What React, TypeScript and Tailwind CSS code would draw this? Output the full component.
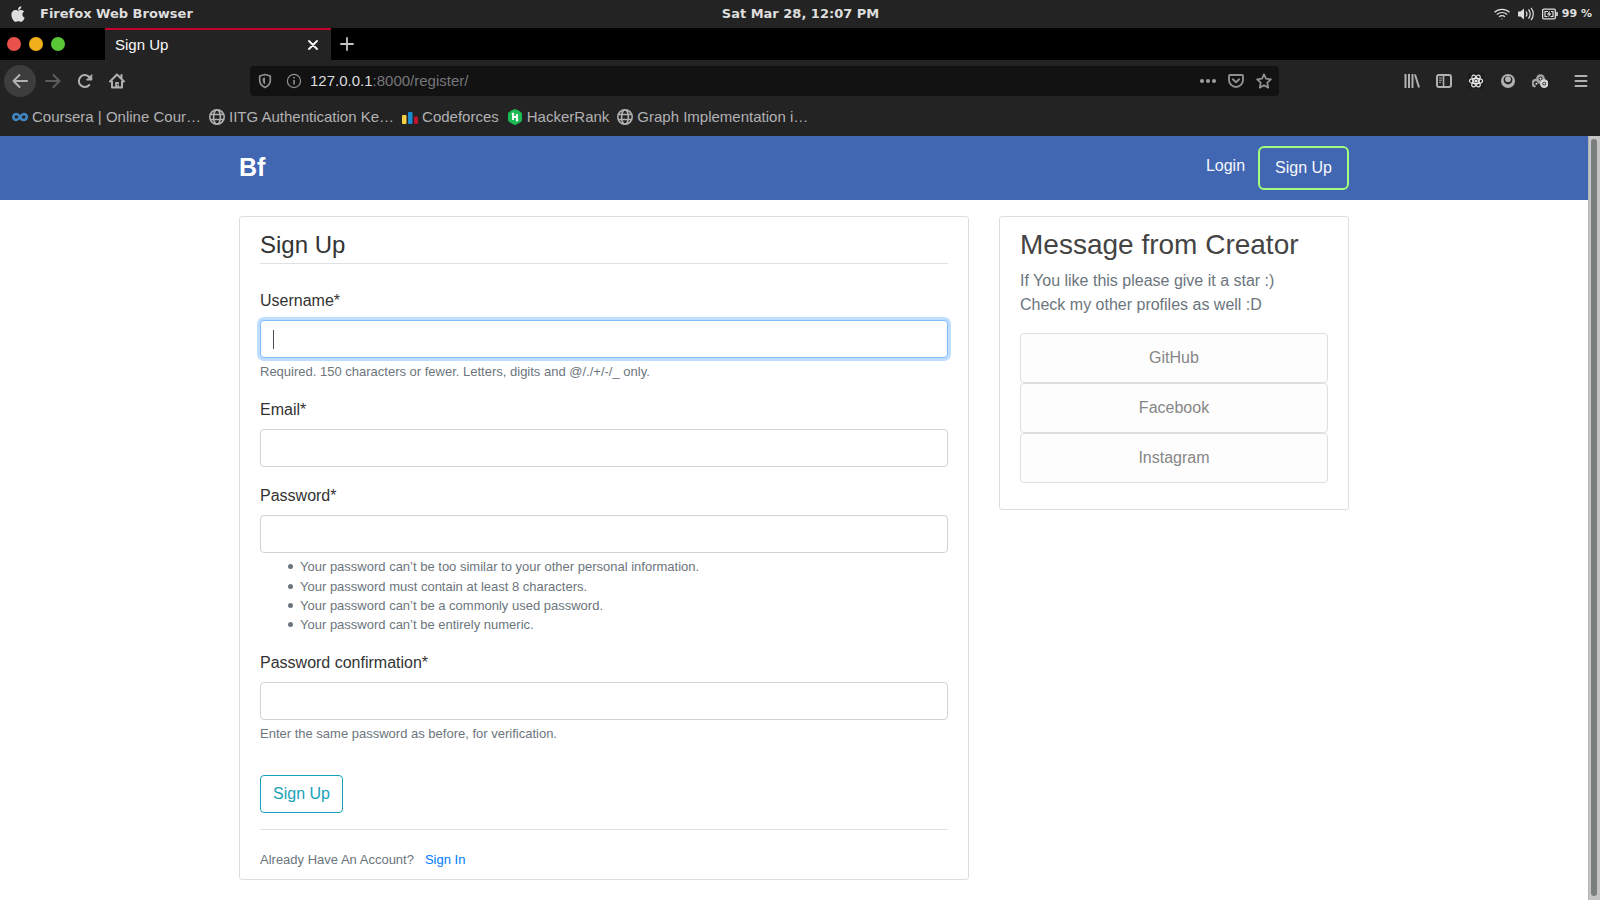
import type { ReactNode } from "react";
import { FaApple } from "react-icons/fa";

const bookmarkClass = "flex items-center gap-1 whitespace-nowrap text-[#b1b1b3]";

function Globe() {
  return (
    <svg className="size-4 shrink-0" viewBox="0 0 16 16" fill="none" stroke="#b1b1b3" strokeWidth="1.6">
      <circle cx="8" cy="8" r="7.2" />
      <ellipse cx="8" cy="8" rx="3.4" ry="7.2" />
      <path d="M1.5 5.5h13M1.5 10.5h13" />
    </svg>
  );
}

function CourseraIcon() {
  return (
    <svg className="size-4 shrink-0" viewBox="0 0 16 16" fill="none" stroke="#3f87c7" strokeWidth="2.6" strokeLinecap="round">
      <path d="M6.6 6.2C5.9 5.4 5.2 5 4.3 5a3 3 0 0 0 0 6c3.4 0 4.200-6 7.500-6a3 3 0 0 1 0 6c-1.200 0-2-.5-2.700-1.400" />
    </svg>
  );
}

function CodeforcesIcon() {
  return (
    <svg className="size-4 shrink-0" viewBox="0 0 16 16">
      <rect x="0" y="6" width="4.500" height="9" rx="1" fill="#f5cf46" />
      <rect x="6" y="3" width="4.500" height="12" rx="1" fill="#1a8bd2" />
      <rect x="12" y="7.500" width="4" height="7.500" rx="1" fill="#c4122e" />
    </svg>
  );
}

function HackerRankIcon() {
  return (
    <svg className="size-4 shrink-0" viewBox="0 0 16 16">
      <path d="M8 0c1 0 6.200 3 6.700 3.900s.5 7.300 0 8.200S9 16 8 16s-6.200-3-6.700-3.900-.5-7.300 0-8.200S7 0 8 0z" fill="#1db954" />
      <path d="M6 4v7M10 5v7M6 8h4" stroke="#fff" strokeWidth="1.800" fill="none" />
      <path d="M4.300 5.200 6 3.200l1.700 2zM8.300 10.800 10 12.800l1.700-2z" fill="#fff" />
    </svg>
  );
}

function SystemBar() {
  return (
    <header className="grid h-7 grid-cols-3 items-center bg-[#232323] pr-2 pl-[9px] font-['DejaVu_Sans',sans-serif] text-[13px] font-bold text-[#dedede]">
      <div className="flex items-center gap-[13px]">
        <FaApple size={18} />
        <span>Firefox Web Browser</span>
      </div>
      <span className="text-center">Sat Mar 28, 12:07 PM</span>
      <div className="flex items-center justify-end gap-2">
        <svg className="h-3 w-4" viewBox="0 0 16 12" fill="none" stroke="#dedede" strokeWidth="1.200">
          <path d="M.5 4.200C4.500.400 11.500.400 15.500 4.200M2.800 6.500c3-2.700 7.400-2.700 10.400 0M5 8.800c1.800-1.500 4.200-1.500 6 0" />
          <circle cx="8" cy="11" r=".6" stroke="#444" />
        </svg>
        <svg className="h-[14px] w-4" viewBox="0 0 16 14" fill="none" stroke="#dedede" strokeWidth="1.200">
          <path d="M0 4.500h2.500L6 1.500v11L2.500 9.500H0z" fill="#dedede" stroke="none" />
          <path d="M8 4.500c1.200 1.500 1.200 3.500 0 5M10.500 2.500c2.300 2.500 2.300 6.500 0 9M13 .8c3 3.500 3 8.900 0 12.400" />
        </svg>
        <div className="flex items-center gap-1">
          <svg className="h-3 w-4" viewBox="0 0 16 12" fill="none" stroke="#dedede">
            <rect x=".6" y="1.100" width="12.800" height="9.800" rx="1.500" strokeWidth="1.300" />
            <path d="M6 3.500H3v5h2.500M8.500 8.500H11v-5H9" strokeWidth="1.200" />
            <path d="M8 2.500 4.800 6.500h2L6 9.500l3.500-4h-2z" fill="#dedede" stroke="none" />
            <path d="M15 4v4" strokeWidth="1.600" />
          </svg>
          <span className="text-[11px]">99 %</span>
        </div>
      </div>
    </header>
  );
}

function TabStrip() {
  return (
    <div className="flex h-8 items-center bg-black">
      <div className="flex w-[105px] shrink-0 gap-2 pl-[7px]">
        <button aria-label="Close window" className="size-[14px] rounded-full bg-[#e9524a]" />
        <button aria-label="Minimize window" className="size-[14px] rounded-full bg-[#f1ae1b]" />
        <button aria-label="Maximize window" className="size-[14px] rounded-full bg-[#58c837]" />
      </div>
      <div className="flex h-full w-[226px] items-center justify-between border-t-2 border-[#c3002f] bg-[#232323] pr-[13px] pl-[10px] text-[15px] text-[#f9f9fa]">
        <span>Sign Up</span>
        <button aria-label="Close tab">
          <svg className="size-[10px]" viewBox="0 0 10 10" stroke="#f9f9fa" strokeWidth="1.800" strokeLinecap="round">
            <path d="m1 1 8 8M9 1 1 9" />
          </svg>
        </button>
      </div>
      <button aria-label="New tab" className="ml-[9px]">
        <svg className="size-[14px]" viewBox="0 0 14 14" stroke="#c4c4c6" strokeWidth="1.800" strokeLinecap="round">
          <path d="M7 1v12M1 7h12" />
        </svg>
      </button>
    </div>
  );
}

function ToolButton({ label, children }: { label: string; children: ReactNode }) {
  return (
    <button aria-label={label} className="flex size-8 shrink-0 items-center justify-center">
      <svg className="size-4" viewBox="0 0 16 16" fill="none" stroke="#b1b1b3" strokeWidth="2" strokeLinecap="round" strokeLinejoin="round">
        {children}
      </svg>
    </button>
  );
}

function Toolbar() {
  return (
    <div className="flex h-[42px] items-center bg-[#232323] pr-[3px] pl-1">
      <div className="flex w-[246px] shrink-0 items-center">
        <div className="mr-px rounded-full bg-[#3d3d3d]">
          <ToolButton label="Back">
            <path d="M15 8H1.500M7.500 2l-6 6 6 6" />
          </ToolButton>
        </div>
        <div className="opacity-40">
          <ToolButton label="Forward">
            <path d="M1 8h13.500M8.500 2l6 6-6 6" />
          </ToolButton>
        </div>
        <ToolButton label="Reload">
          <path d="M12.300 12A6 6 0 1 1 12.300 4" />
          <path d="M14.800 2v5h-5z" fill="#b1b1b3" strokeWidth="1" />
        </ToolButton>
        <ToolButton label="Home">
          <path d="M1 8.500 8 1.500l7 7M3 8.500v6h10v-6M12.500 2v3" />
          <path d="M8 14V9" strokeWidth="3.600" strokeLinecap="butt" />
          <path d="M8.500 11v1.200" stroke="#232323" strokeWidth="1.200" strokeLinecap="butt" />
        </ToolButton>
      </div>
      <div className="flex h-[30px] flex-1 items-center rounded bg-[#121212] px-[7px]">
        <svg className="size-4" viewBox="0 0 16 16" fill="none" stroke="#8f8f91" strokeWidth="1.700">
          <path d="M8 1.500 13.300 3v4.500c0 3.200-2 5.400-5.300 7-3.300-1.600-5.300-3.800-5.300-7V3z" strokeLinejoin="round" />
          <path d="M8 4.500v7c-1.500-1-2.300-2.300-2.300-4V5z" fill="#8f8f91" stroke="none" />
        </svg>
        <svg className="ml-[13px] size-4" viewBox="0 0 16 16" fill="none" stroke="#8f8f91" strokeWidth="1.200">
          <circle cx="8" cy="8" r="6.600" />
          <path d="M8 7v4.500M8 4v1.600" strokeWidth="1.600" />
        </svg>
        <a href="#register" className="ml-2 text-[15px] text-[#76767a]">
          <span className="text-[#dcdcde]">127.0.0.1</span>:8000/register/
        </a>
        <div className="ml-auto flex gap-3">
          <svg className="size-4" viewBox="0 0 16 16" fill="#a0a0a2">
            <circle cx="2" cy="8" r="2" />
            <circle cx="8" cy="8" r="2" />
            <circle cx="14" cy="8" r="2" />
          </svg>
          <svg className="size-4" viewBox="0 0 16 16" fill="none" stroke="#8f8f91" strokeWidth="1.900" strokeLinecap="round" strokeLinejoin="round">
            <path d="M2 2h12a1 1 0 0 1 1 1v4a7 7 0 0 1-14 0V3a1 1 0 0 1 1-1z" />
            <path d="M4.800 6.300 8 9.300l3.200-3" />
          </svg>
          <svg className="size-4" viewBox="0 0 16 16" fill="none" stroke="#8f8f91" strokeWidth="1.800" strokeLinejoin="round">
            <path d="m8 1.300 2 4.400 4.900.6-3.600 3.300.9 5L8 12.200l-4.200 2.400.9-5L1.100 6.300 6 5.700z" />
          </svg>
        </div>
      </div>
      <div className="ml-[117px] flex shrink-0">
        <ToolButton label="Library">
          <path d="M1.500 1v14M5 1v14M8.500 1v14M11 1.500l4 13" strokeWidth="2" strokeLinecap="butt" />
        </ToolButton>
        <ToolButton label="Sidebars">
          <rect x="1" y="2" width="14" height="12" rx="2" />
          <path d="M7.500 2v12" strokeWidth="1.600" />
          <path d="M3 5h3M3 7.200h3M3 9.400h2" strokeWidth="1" strokeLinecap="butt" />
        </ToolButton>
        <ToolButton label="React Developer Tools">
          <rect width="16" height="16" fill="#1c1c1c" stroke="none" />
          <g stroke="#e8e8e8" strokeWidth="1.200">
            <ellipse cx="8" cy="8" rx="6.600" ry="2.600" />
            <ellipse cx="8" cy="8" rx="6.600" ry="2.600" transform="rotate(60 8 8)" />
            <ellipse cx="8" cy="8" rx="6.600" ry="2.600" transform="rotate(120 8 8)" />
            <circle cx="8" cy="8" r="1" fill="#fff" />
          </g>
        </ToolButton>
        <ToolButton label="Account">
          <circle cx="8" cy="8" r="7" fill="#b1b1b3" stroke="none" />
          <path d="M3.800 5.200C3 8.500 5 11.300 8 11.300s5-2.800 4.200-6.100C11.500 3.400 9.800 2.900 8 2.900s-3.500.5-4.200 2.300z" fill="#232323" stroke="none" />
          <circle cx="8" cy="6.200" r="2.900" fill="#b1b1b3" stroke="none" />
        </ToolButton>
        <ToolButton label="Extension">
          <g stroke="#a4a4a6" strokeWidth="2.400">
            <path d="M2.500 13.200A3.200 3.200 0 1 1 6.800 9.500" />
            <circle cx="8.500" cy="5.600" r="3.200" />
            <circle cx="12.200" cy="10.600" r="3.100" stroke="#d4d4d4" />
          </g>
          <g fill="#e0e0e0" stroke="none">
            <circle cx="8.500" cy="5.600" r="1.100" />
            <circle cx="12.200" cy="10.600" r="1.100" />
            <circle cx="4.400" cy="10.800" r="1" />
          </g>
        </ToolButton>
      </div>
      <div className="ml-[9px]">
        <ToolButton label="Menu">
          <path d="M2.500 3h11M2.500 8h11M2.500 13h11" />
        </ToolButton>
      </div>
    </div>
  );
}

function Bookmarks() {
  return (
    <nav aria-label="Bookmarks" className="flex h-[34px] items-start gap-2 bg-[#232323] px-3 pt-1 text-[15px] leading-[22px]">
      <a href="#coursera" className={bookmarkClass}><CourseraIcon />Coursera | Online Cour…</a>
      <a href="#iitg" className={bookmarkClass}><Globe />IITG Authentication Ke…</a>
      <a href="#codeforces" className={bookmarkClass}><CodeforcesIcon />Codeforces</a>
      <a href="#hackerrank" className={bookmarkClass}><HackerRankIcon />HackerRank</a>
      <a href="#graph" className={bookmarkClass}><Globe />Graph Implementation i…</a>
    </nav>
  );
}

interface FieldProps {
  id: string;
  label: string;
  type?: string;
  active?: boolean;
  children?: ReactNode;
}

function Field({ id, label, type = "text", active = false, children }: FieldProps) {
  return (
    <div className="mb-4">
      <label htmlFor={id} className="mb-[7px] block pt-px">{label}*</label>
      <div className="relative">
        <input
          id={id}
          type={type}
          className={
            active
              ? "block h-[38px] w-full rounded border border-[#80bdff] bg-white px-3 caret-transparent ring-3 ring-[#bfdeff] outline-none"
              : "block h-[38px] w-full rounded border border-[#ced4da] bg-white px-3 outline-none"
          }
        />
        {active && <span className="absolute top-[10px] left-[13px] h-[19px] w-px bg-[#495057]" />}
      </div>
      {children && <div className="mt-1 text-[13px] leading-[19px] text-[#6c757d]">{children}</div>}
    </div>
  );
}

const rules = [
  "Your password can’t be too similar to your other personal information.",
  "Your password must contain at least 8 characters.",
  "Your password can’t be a commonly used password.",
  "Your password can’t be entirely numeric.",
];

function SignUpCard() {
  return (
    <section className="min-w-0 self-start rounded-[3px] border border-[#dddddd] bg-white px-5 py-[10px]">
      <form>
        <h1 className="mb-6 border-b border-[#dee2e6] text-[24px] leading-9">Sign Up</h1>
        <Field id="username" label="Username" active>
          Required. 150 characters or fewer. Letters, digits and @/./+/-/_ only.
        </Field>
        <Field id="email" label="Email" type="email" />
        <Field id="password" label="Password" type="password">
          <ul className="pl-7">
            {rules.map((rule) => (
              <li
                key={rule}
                className="flex items-center gap-[7px] before:size-[5px] before:shrink-0 before:rounded-full before:bg-[#6c757d] first:pb-px"
              >
                {rule}
              </li>
            ))}
          </ul>
        </Field>
        <Field id="confirmation" label="Password confirmation" type="password">
          Enter the same password as before, for verification.
        </Field>
        <button type="button" className="mt-4 h-[38px] rounded border border-[#17a2b8] px-3 text-[#17a2b8]">
          Sign Up
        </button>
      </form>
      <div className="mt-4 border-t border-[#dee2e6] pt-5 text-[13px] leading-[19px] text-[#6c757d]">
        Already Have An Account?
        <a href="#login" className="ml-[11px] text-[#007bff]">Sign In</a>
      </div>
    </section>
  );
}

function CreatorCard() {
  return (
    <aside className="min-w-0 self-start rounded-[3px] border border-[#dddddd] bg-white px-5 py-[10px]">
      <h2 className="mb-[6px] text-[28px] leading-9 text-[#444444]">Message from Creator</h2>
      <p className="mb-4 text-[#6c757d]">
        If You like this please give it a star :)
        <br />
        Check my other profiles as well :D
      </p>
      <ul className="mb-4 text-center text-[#868686]">
        {["GitHub", "Facebook", "Instagram"].map((name) => (
          <li key={name}>
            <a href={"#" + name} className="block rounded border border-[#dfdfdf] bg-[#fdfdfd] py-3">{name}</a>
          </li>
        ))}
      </ul>
    </aside>
  );
}

export default function App() {
  return (
    <div className="flex min-h-screen flex-col bg-white font-['Liberation_Sans',Arial,sans-serif] text-[16px] leading-6 text-[#333333]">
      <SystemBar />
      <TabStrip />
      <Toolbar />
      <Bookmarks />
      <div className="flex flex-1">
        <div className="min-w-0 flex-1">
          <nav className="bg-[#4267b2]">
            <div className="mx-auto flex h-16 max-w-[1140px] items-center px-[15px] text-[#f5f7fb]">
              <a href="#home" className="pb-[2px] text-[25px] font-bold text-white">Bf</a>
              <div className="ml-auto flex items-start gap-[13px]">
                <a href="#login" className="pt-2">Login</a>
                <a href="#register" className="rounded-md border-2 border-[#a3fe7b] px-[15px] py-2">Sign Up</a>
              </div>
            </div>
          </nav>
          <main className="mx-auto grid max-w-[1140px] grid-cols-[73fr_35fr] gap-[30px] px-[15px] pt-4">
            <SignUpCard />
            <CreatorCard />
          </main>
        </div>
        <div className="flex w-3 border-l border-[#b4b4b4] bg-[#c4c4c4] pt-[3px] pr-[3px] pb-1 pl-[2px]">
          <div className="w-[6px] rounded-full bg-[#7a7e7d]" />
        </div>
      </div>
    </div>
  );
}
